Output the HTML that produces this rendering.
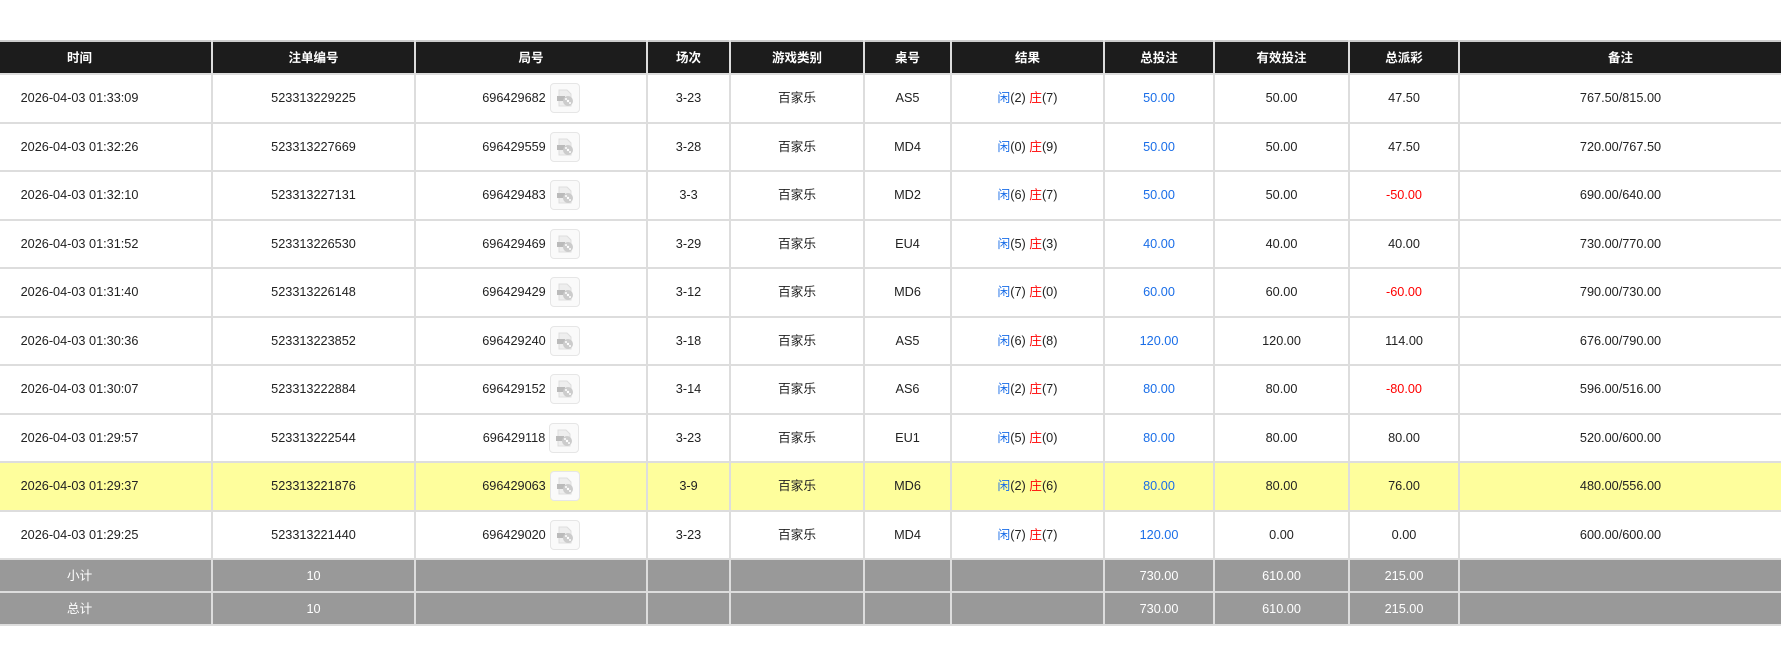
<!DOCTYPE html>
<html><head><meta charset="utf-8"><style>
body{margin:0;background:#fff;width:1781px;height:655px;overflow:hidden;font-family:"Liberation Sans","Noto Sans CJK SC",sans-serif;}
table{position:absolute;top:40px;left:0;width:1781px;border-collapse:collapse;table-layout:fixed;font-size:12.7px;color:#222;}
td,th{border:2px solid #ddd;text-align:center;padding:0;white-space:nowrap;line-height:16px;vertical-align:middle;}
tr:first-child th{border-top:2px solid #ccc;}
td:first-child,th:first-child{border-left:none;padding-right:52px}
td:last-child,th:last-child{border-right:none}
th{background:#1c1c1c;color:#fff;height:31px;font-weight:bold;font-size:12.5px;}
tr.d td{height:46.5px;}
tr.y td{background:#fefe9c;}
tr.s td{background:#999;color:#fff;height:31px;}
.b{color:#1a6ee8}.r{color:#f00}
.w{display:inline-flex;align-items:center;}
.ic{display:inline-block;width:28px;height:28px;border:1px solid #e6e6e6;border-radius:4px;margin-left:4px;background:#fafafa;position:relative}
.ic svg{position:absolute;left:4px;top:4px}
</style></head><body>
<table>
<colgroup><col style="width:212px"><col style="width:203px"><col style="width:232px"><col style="width:83px"><col style="width:134px"><col style="width:87px"><col style="width:153px"><col style="width:110px"><col style="width:135px"><col style="width:110px"><col style="width:322px"></colgroup>
<tr><th>时间</th><th>注单编号</th><th>局号</th><th>场次</th><th>游戏类别</th><th>桌号</th><th>结果</th><th>总投注</th><th>有效投注</th><th>总派彩</th><th>备注</th></tr>
<tr class="d"><td>2026-04-03 01:33:09</td><td>523313229225</td><td><span class="w">696429682<span class="ic"><svg width="20" height="20" viewBox="0 0 20 20"><path d="M4 2h8l4 4v12H4z" fill="#eee" stroke="#ddd"/><rect x="2" y="8" width="8" height="5" fill="#bbb"/><circle cx="13" cy="13" r="5" fill="#ccc"/><circle cx="13" cy="13" r="1.2" fill="#fff"/><circle cx="11" cy="11" r="1" fill="#fff"/><circle cx="15" cy="15" r="1" fill="#fff"/></svg></span></span></td><td>3-23</td><td>百家乐</td><td>AS5</td><td><span class="b">闲</span>(2) <span class="r">庄</span>(7)</td><td class="b">50.00</td><td>50.00</td><td>47.50</td><td>767.50/815.00</td></tr>
<tr class="d"><td>2026-04-03 01:32:26</td><td>523313227669</td><td><span class="w">696429559<span class="ic"><svg width="20" height="20" viewBox="0 0 20 20"><path d="M4 2h8l4 4v12H4z" fill="#eee" stroke="#ddd"/><rect x="2" y="8" width="8" height="5" fill="#bbb"/><circle cx="13" cy="13" r="5" fill="#ccc"/><circle cx="13" cy="13" r="1.2" fill="#fff"/><circle cx="11" cy="11" r="1" fill="#fff"/><circle cx="15" cy="15" r="1" fill="#fff"/></svg></span></span></td><td>3-28</td><td>百家乐</td><td>MD4</td><td><span class="b">闲</span>(0) <span class="r">庄</span>(9)</td><td class="b">50.00</td><td>50.00</td><td>47.50</td><td>720.00/767.50</td></tr>
<tr class="d"><td>2026-04-03 01:32:10</td><td>523313227131</td><td><span class="w">696429483<span class="ic"><svg width="20" height="20" viewBox="0 0 20 20"><path d="M4 2h8l4 4v12H4z" fill="#eee" stroke="#ddd"/><rect x="2" y="8" width="8" height="5" fill="#bbb"/><circle cx="13" cy="13" r="5" fill="#ccc"/><circle cx="13" cy="13" r="1.2" fill="#fff"/><circle cx="11" cy="11" r="1" fill="#fff"/><circle cx="15" cy="15" r="1" fill="#fff"/></svg></span></span></td><td>3-3</td><td>百家乐</td><td>MD2</td><td><span class="b">闲</span>(6) <span class="r">庄</span>(7)</td><td class="b">50.00</td><td>50.00</td><td class="r">-50.00</td><td>690.00/640.00</td></tr>
<tr class="d"><td>2026-04-03 01:31:52</td><td>523313226530</td><td><span class="w">696429469<span class="ic"><svg width="20" height="20" viewBox="0 0 20 20"><path d="M4 2h8l4 4v12H4z" fill="#eee" stroke="#ddd"/><rect x="2" y="8" width="8" height="5" fill="#bbb"/><circle cx="13" cy="13" r="5" fill="#ccc"/><circle cx="13" cy="13" r="1.2" fill="#fff"/><circle cx="11" cy="11" r="1" fill="#fff"/><circle cx="15" cy="15" r="1" fill="#fff"/></svg></span></span></td><td>3-29</td><td>百家乐</td><td>EU4</td><td><span class="b">闲</span>(5) <span class="r">庄</span>(3)</td><td class="b">40.00</td><td>40.00</td><td>40.00</td><td>730.00/770.00</td></tr>
<tr class="d"><td>2026-04-03 01:31:40</td><td>523313226148</td><td><span class="w">696429429<span class="ic"><svg width="20" height="20" viewBox="0 0 20 20"><path d="M4 2h8l4 4v12H4z" fill="#eee" stroke="#ddd"/><rect x="2" y="8" width="8" height="5" fill="#bbb"/><circle cx="13" cy="13" r="5" fill="#ccc"/><circle cx="13" cy="13" r="1.2" fill="#fff"/><circle cx="11" cy="11" r="1" fill="#fff"/><circle cx="15" cy="15" r="1" fill="#fff"/></svg></span></span></td><td>3-12</td><td>百家乐</td><td>MD6</td><td><span class="b">闲</span>(7) <span class="r">庄</span>(0)</td><td class="b">60.00</td><td>60.00</td><td class="r">-60.00</td><td>790.00/730.00</td></tr>
<tr class="d"><td>2026-04-03 01:30:36</td><td>523313223852</td><td><span class="w">696429240<span class="ic"><svg width="20" height="20" viewBox="0 0 20 20"><path d="M4 2h8l4 4v12H4z" fill="#eee" stroke="#ddd"/><rect x="2" y="8" width="8" height="5" fill="#bbb"/><circle cx="13" cy="13" r="5" fill="#ccc"/><circle cx="13" cy="13" r="1.2" fill="#fff"/><circle cx="11" cy="11" r="1" fill="#fff"/><circle cx="15" cy="15" r="1" fill="#fff"/></svg></span></span></td><td>3-18</td><td>百家乐</td><td>AS5</td><td><span class="b">闲</span>(6) <span class="r">庄</span>(8)</td><td class="b">120.00</td><td>120.00</td><td>114.00</td><td>676.00/790.00</td></tr>
<tr class="d"><td>2026-04-03 01:30:07</td><td>523313222884</td><td><span class="w">696429152<span class="ic"><svg width="20" height="20" viewBox="0 0 20 20"><path d="M4 2h8l4 4v12H4z" fill="#eee" stroke="#ddd"/><rect x="2" y="8" width="8" height="5" fill="#bbb"/><circle cx="13" cy="13" r="5" fill="#ccc"/><circle cx="13" cy="13" r="1.2" fill="#fff"/><circle cx="11" cy="11" r="1" fill="#fff"/><circle cx="15" cy="15" r="1" fill="#fff"/></svg></span></span></td><td>3-14</td><td>百家乐</td><td>AS6</td><td><span class="b">闲</span>(2) <span class="r">庄</span>(7)</td><td class="b">80.00</td><td>80.00</td><td class="r">-80.00</td><td>596.00/516.00</td></tr>
<tr class="d"><td>2026-04-03 01:29:57</td><td>523313222544</td><td><span class="w">696429118<span class="ic"><svg width="20" height="20" viewBox="0 0 20 20"><path d="M4 2h8l4 4v12H4z" fill="#eee" stroke="#ddd"/><rect x="2" y="8" width="8" height="5" fill="#bbb"/><circle cx="13" cy="13" r="5" fill="#ccc"/><circle cx="13" cy="13" r="1.2" fill="#fff"/><circle cx="11" cy="11" r="1" fill="#fff"/><circle cx="15" cy="15" r="1" fill="#fff"/></svg></span></span></td><td>3-23</td><td>百家乐</td><td>EU1</td><td><span class="b">闲</span>(5) <span class="r">庄</span>(0)</td><td class="b">80.00</td><td>80.00</td><td>80.00</td><td>520.00/600.00</td></tr>
<tr class="d y"><td>2026-04-03 01:29:37</td><td>523313221876</td><td><span class="w">696429063<span class="ic"><svg width="20" height="20" viewBox="0 0 20 20"><path d="M4 2h8l4 4v12H4z" fill="#eee" stroke="#ddd"/><rect x="2" y="8" width="8" height="5" fill="#bbb"/><circle cx="13" cy="13" r="5" fill="#ccc"/><circle cx="13" cy="13" r="1.2" fill="#fff"/><circle cx="11" cy="11" r="1" fill="#fff"/><circle cx="15" cy="15" r="1" fill="#fff"/></svg></span></span></td><td>3-9</td><td>百家乐</td><td>MD6</td><td><span class="b">闲</span>(2) <span class="r">庄</span>(6)</td><td class="b">80.00</td><td>80.00</td><td>76.00</td><td>480.00/556.00</td></tr>
<tr class="d"><td>2026-04-03 01:29:25</td><td>523313221440</td><td><span class="w">696429020<span class="ic"><svg width="20" height="20" viewBox="0 0 20 20"><path d="M4 2h8l4 4v12H4z" fill="#eee" stroke="#ddd"/><rect x="2" y="8" width="8" height="5" fill="#bbb"/><circle cx="13" cy="13" r="5" fill="#ccc"/><circle cx="13" cy="13" r="1.2" fill="#fff"/><circle cx="11" cy="11" r="1" fill="#fff"/><circle cx="15" cy="15" r="1" fill="#fff"/></svg></span></span></td><td>3-23</td><td>百家乐</td><td>MD4</td><td><span class="b">闲</span>(7) <span class="r">庄</span>(7)</td><td class="b">120.00</td><td>0.00</td><td>0.00</td><td>600.00/600.00</td></tr>
<tr class="s"><td>小计</td><td>10</td><td></td><td></td><td></td><td></td><td></td><td>730.00</td><td>610.00</td><td>215.00</td><td></td></tr>
<tr class="s"><td>总计</td><td>10</td><td></td><td></td><td></td><td></td><td></td><td>730.00</td><td>610.00</td><td>215.00</td><td></td></tr>
</table>
</body></html>
